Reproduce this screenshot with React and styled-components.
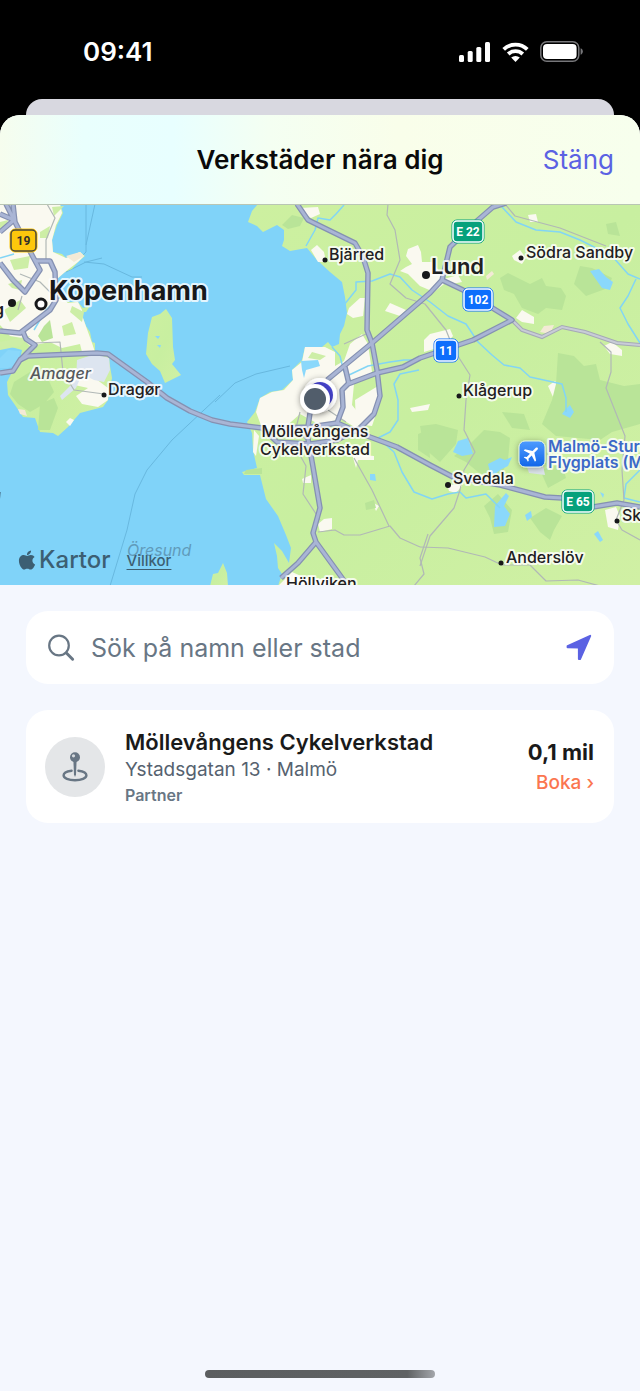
import React from 'react'
import styled, { createGlobalStyle } from 'styled-components'
import { FaApple } from 'react-icons/fa'
import { MdFlight } from 'react-icons/md'

const GlobalStyle = createGlobalStyle`
  * {
    box-sizing: border-box;
  }

  body {
    margin: 0;
    background: #000;
    font-family: Inter, 'Liberation Sans', sans-serif;
    -webkit-font-smoothing: antialiased;
  }
`

const Screen = styled.div`
  display: flex;
  flex-direction: column;
  min-height: 100vh;
  background: #000;
`

const StatusBar = styled.div`
  display: flex;
  align-items: center;
  justify-content: space-between;
  height: 99px;
  padding: 4px 57px 0 83px;
  color: #fff;
`

const Clock = styled.time`
  font-size: 26px;
  font-weight: 600;
`

const StatusIcons = styled.div`
  display: flex;
  align-items: center;
  gap: 11px;
`

const BackCard = styled.div`
  height: 16px;
  margin: 0 26px;
  border-radius: 16px 16px 0 0;
  background: #d8d8e0;
`

const Sheet = styled.main`
  display: flex;
  flex-direction: column;
  flex: 1;
  overflow: hidden;
  border-radius: 20px 20px 0 0;
  background: #f4f7fe;
`

const SheetHeader = styled.header`
  display: grid;
  grid-template-columns: 1fr auto 1fr;
  align-items: center;
  height: 90px;
  padding: 0 26px;
  border-bottom: 1px solid #b9c6b4;
  background: linear-gradient(90deg, #f6fdee 0%, #e9fffd 13%, #e8ffff 27%, #f4fff2 42%, #f9feea 62%, #f7ffed 100%);
`

const SheetTitle = styled.h1`
  grid-column: 2;
  margin: 0;
  color: #0a0a0a;
  font-size: 26px;
  font-weight: 600;
`

const CloseButton = styled.button`
  justify-self: end;
  padding: 0;
  border: 0;
  background: none;
  color: #5b62e3;
  font-family: inherit;
  font-size: 26px;
  cursor: pointer;
`

const MapFrame = styled.section`
  position: relative;
  height: 380px;
  overflow: hidden;
  background: #80d3f9;
`

const MapSvg = styled.svg`
  display: block;
  width: 100%;
  height: 100%;
`

const Label = styled.text`
  font-size: ${({ $size }) => $size || 16}px;
  font-weight: ${({ $weight }) => $weight || 500};
  font-style: ${({ $italic }) => ($italic ? 'italic' : 'normal')};
  text-anchor: ${({ $anchor }) => $anchor || 'start'};
  fill: ${({ $color }) => $color || '#1f2022'};
  stroke: ${({ $halo }) => $halo || 'rgba(255, 255, 255, 0.8)'};
  stroke-width: 4px;
  stroke-linejoin: round;
  paint-order: stroke;
`

const ShieldText = styled.text`
  font-family: Roboto, sans-serif;
  font-size: 12px;
  font-weight: 700;
  text-anchor: middle;
  fill: ${({ $color }) => $color};
`

const Attribution = styled.div`
  position: absolute;
  left: 16px;
  bottom: 10px;
  display: flex;
  align-items: center;
  gap: 16px;
  color: #3c5f73;
`

const MapsBrand = styled.span`
  display: flex;
  align-items: center;
  gap: 1px;
  font-size: 24px;
  font-weight: 500;
  line-height: 30px;
`

const TermsLink = styled.a`
  color: inherit;
  font-size: 15px;
  font-weight: 500;
  text-underline-offset: 3px;
`

const Content = styled.div`
  display: flex;
  flex-direction: column;
  gap: 26px;
  padding: 26px;
`

const SearchField = styled.label`
  display: flex;
  align-items: center;
  height: 73px;
  padding: 0 22px;
  border-radius: 22px;
  background: #fff;
`

const SearchInput = styled.input`
  flex: 1;
  min-width: 0;
  margin-left: 16px;
  padding: 0;
  border: 0;
  outline: 0;
  background: none;
  color: #1c1c1e;
  font-family: inherit;
  font-size: 25px;

  &::placeholder {
    color: #687684;
    opacity: 1;
  }
`

const IconButton = styled.button`
  display: flex;
  padding: 0;
  border: 0;
  background: none;
  cursor: pointer;
`

const WorkshopList = styled.ul`
  margin: 0;
  padding: 0;
  list-style: none;
`

const WorkshopCard = styled.li`
  display: flex;
  align-items: center;
  gap: 20px;
  height: 113px;
  padding: 0 20px 0 19px;
  border-radius: 22px;
  background: #fff;
`

const Avatar = styled.div`
  display: flex;
  align-items: center;
  justify-content: center;
  width: 60px;
  height: 60px;
  border-radius: 50%;
  background: #e4e6e8;
`

const WorkshopInfo = styled.div`
  flex: 1;
`

const WorkshopName = styled.h2`
  margin: 0;
  color: #1a1a1a;
  font-size: 22px;
  font-weight: 600;
  line-height: 30px;
`

const WorkshopAddress = styled.p`
  margin: 0;
  color: #56626f;
  font-size: 19px;
  line-height: 26px;
`

const WorkshopTag = styled.p`
  margin: 0;
  color: #687684;
  font-size: 16px;
  font-weight: 600;
  line-height: 24px;
`

const WorkshopAside = styled.div`
  text-align: right;
`

const Distance = styled.p`
  margin: 0;
  color: #1a1a1a;
  font-size: 22px;
  font-weight: 700;
  line-height: 32px;
`

const BookLink = styled.a`
  color: #fb7650;
  font-size: 19px;
  font-weight: 500;
  line-height: 30px;
  text-decoration: none;
`

const HomeIndicator = styled.div`
  width: 36%;
  height: 8px;
  margin: auto auto 13px;
  border-radius: 4px;
  background: linear-gradient(90deg, #5b5e60 0%, #5f6264 88%, #a3a6ab 100%);
`

const land = [
  // Copenhagen and Amager
  'M0 204H60L63 213 57 225 52 240 53 252 62 254 66 258 80 252 85 256 78 262 72 269 65 272 57 279 60 296 68 302 78 302 83 308 90 306 86 312 78 312 83 318 86 326 90 332 92 342 95 343 95 352 109 356 110 366 112 378 108 400 103 407 80 413 74 420 68 427 58 436 53 433 40 432 35 418 23 417 15 405 8 395 7 382 13 370 20 360 22 350 4 345 0 350Z',
  // Saltholm
  'M152 317L160 314 166 309 172 318 173 347 175 360 172 364 181 375 165 383 160 371 152 364 146 354 148 333Z',
  // Skåne
  'M258 204L252 211 248 222 257 226 263 232 277 225 284 230 284 240 282 246 290 251 307 248 317 260 330 272 342 282 345 297 347 313 344 326 340 334 339 344 332 347 328 342 322 347 305 347 302 360 292 370 293 380 282 390 270 392 260 398 255 412 247 422 252 433 253 450 257 468 242 472 244 475 260 475 266 499 278 516 286 535 291 548 289 563 282 551 274 543 277 556 278 568 282 574 278 586H640V204Z',
  'M210 586L213 574 218 573 223 563 227 573 228 586Z'
]

const urban = [
  'M0 204H60L62 213 56 225 52 240 53 252 66 258 80 252 84 256 78 262 65 272 57 279 59 296 68 303 78 302 82 310 83 318 88 332 92 343 95 352 82 352 80 344 62 348 50 342 30 346 22 338 10 336 0 325Z',
  'M62 372L78 368 92 376 108 388 108 400 98 407 82 404 76 396 88 388 70 384Z',
  'M66 422L70 418 74 420 70 426Z',
  'M305 347L325 347 335 352 335 366 344 361 350 344 362 334 368 344 372 372 354 384 352 405 364 420 356 428 340 418 322 426 300 414 282 430 262 428 256 412 260 398 272 392 284 390 293 380 292 370 302 362Z',
  'M311 250L317 245 324 252 326 262 318 262Z',
  'M349 308L360 298 365 298 363 316 353 318 347 314Z',
  'M300 208L318 207 320 214 311 218 304 213Z',
  'M385 311L390 303 406 310 400 316Z',
  'M408 249L418 245 421 252 422 262 432 262 440 272 444 284 434 292 420 286 414 280 408 274 400 271 406 267 412 264 406 256Z',
  'M444 279L458 275 462 282 452 284Z',
  'M424 340L430 334 450 329 453 336 444 346 424 352Z',
  'M512 256L520 250 526 258 522 264 514 260Z',
  'M516 318L522 310 534 317 534 324 522 322Z',
  'M604 346L612 342 622 350 622 356 610 354Z',
  'M548 386L555 381 561 388 553 397Z',
  'M605 510L616 507 620 516 618 530 608 527Z',
  'M447 484L462 486 456 493 449 491Z',
  'M302 479L311 475 311 483 303 483Z',
  'M318 524L324 519 332 518 332 529 320 532Z',
  'M528 215L536 214 538 222 530 222Z',
  'M372 502L379 506 376 511Z',
  'M410 408L420 406 430 404 428 410 412 412Z',
  'M355 400L378 386 382 396 372 426 356 424Z',
  'M352 454L374 456 374 460 358 460 356 468Z',
  'M254 430L259 436 256 456 253 452Z',
  'M292 572L310 580 330 578 340 586 278 586Z'
]

const forest = [
  'M14 382L30 372 46 374 54 392 44 404 30 412 18 404 10 394Z',
  'M40 404L54 398 58 408 50 430 38 430Z',
  'M44 326L50 320 53 338 42 342 38 336Z',
  'M282 225L292 215 304 218 300 226 288 229Z',
  'M500 278L508 273 530 284 542 278 546 286 561 288 566 296 562 310 546 308 538 314 522 308 514 294 504 290Z',
  'M574 284L580 266 592 268 612 278 608 288 586 296Z',
  'M558 353L574 356 584 366 596 364 600 380 624 386 640 384V424L612 432 600 440 556 436 542 424 552 400 556 384Z',
  'M470 444L484 430 500 432 510 438 508 460 498 482 478 472 466 462 454 456Z',
  'M420 426L436 424 458 430 456 444 440 462 424 448Z',
  'M484 506L498 494 512 510 508 532 494 534 490 518Z',
  'M530 518L546 508 562 516 554 530 550 540 540 532Z',
  'M502 412L524 414 530 430 512 428Z',
  'M540 470L562 464 566 478 548 488Z',
  'M606 224L616 222 620 236 608 234Z',
  'M418 434L428 430 430 458 418 450Z',
  'M365 503L374 500 376 508 366 510Z',
  'M246 470L262 468 262 474 244 474Z'
]

const parks = [
  'M10 260L30 256 28 268 14 270Z',
  'M52 207L64 206 54 216Z',
  'M40 232L50 226 48 238 40 238Z',
  'M8 284L22 280 20 290 12 288Z',
  'M4 310L20 300 26 308 10 322Z',
  'M62 326L72 322 76 334 64 336Z',
  'M0 342L30 336 20 346 0 350Z',
  'M72 306L84 312 82 322 70 312Z',
  'M0 222L8 220 6 230 0 232Z',
  'M312 352L326 356 320 360 308 358Z'
]

const lakes = [
  'M590 271L599 269 606 277 613 282 610 290 602 288Z',
  'M453 452L458 441 468 438 473 454 462 456Z',
  'M488 464L500 458 505 460 512 457 508 466 500 470 494 475 490 472Z',
  'M495 506L506 493 509 496 504 506 510 514 505 526 494 527Z',
  'M525 515L531 511 532 517 527 521Z',
  'M594 534L598 531 603 540 600 542Z',
  'M565 410L570 405 574 412 570 418 562 414Z',
  'M370 474L375 474 376 481 370 480Z',
  'M600 492L604 494 603 498Z',
  'M0 358L8 350 20 351 18 364 8 368 0 368Z',
  'M155 336L160 336 158 339Z',
  'M157 345L161 345 160 348Z',
  'M301 361L318 360 320 366 306 370 304 378 302 370Z'
]

const streams = [
  'M306 246L315 230 318 218 330 220 336 214 344 205',
  'M344 305L356 290 356 282 372 281 390 274 400 277 412 290 430 302 448 316 466 324 478 342 492 355 504 365 520 368 530 377 562 384 566 398 566 412',
  'M502 207L516 222 536 230 560 232 580 240 596 248 612 256 628 274 640 279',
  'M636 279L628 296 620 308 628 324 640 343',
  'M349 375L368 366 390 362 404 360 420 360',
  'M419 370L400 374 394 384 398 400 398 420 390 432 378 438 394 452 402 472 414 492 432 499 448 494 460 492 466 498 486 494 500 508',
  'M640 470L626 484 624 498 640 502',
  'M332 347L340 356 344 372',
  'M34 330L46 310 56 300 68 292',
  'M15 222L22 232',
  'M0 258L14 254',
  'M34 345L26 340'
]

const ferries = [
  'M86 204L86 252 66 272M95 204L86 245M66 272L86 262 102 258M84 262L104 264 132 277H142',
  'M220 395L172 440 147 470 135 494 127 530 110 586',
  'M215 402L235 383 256 374 290 366'
]

const minorRoads = [
  'M388 204L387 215 395 230 400 260 390 284 406 298 425 304 446 330 454 350 470 375 466 400 464 430 475 452 464 470 460 490 454 508 430 536 420 566',
  'M505 204L515 216 560 228 606 246',
  'M600 342L611 352 611 372 606 388 625 436 622 470 624 500 616 520 622 530 640 540',
  'M420 547L448 548 485 557 502 565 530 565 546 581 578 580 600 586',
  'M296 448L306 466 303 494 320 520',
  'M318 532L335 530 344 535 360 535 390 526 400 538 420 547',
  'M354 458L372 490 389 526',
  'M428 534L420 558 424 574 414 586',
  'M328 410L346 422M300 412L296 428 306 440M344 344L366 334',
  'M47 204L55 218 46 240 46 260M20 274L40 282 52 294M34 343L60 342 63 372 74 390 104 394M18 310L22 296'
]

const majorRoads = [
  'M0 373L13 371 20 360 28 356 97 353 108 354 147 382 167 398 190 411 212 420 230 424 262 428 277 442 310 444 337 440 360 428 374 414 380 396 377 370 372 343 367 330 368 273 363 257 355 243 308 220 297 204',
  'M327 380L372 343 430 293 442 280 450 247 478 220 493 207 506 203',
  'M442 280L463 290 512 320 473 340 420 358 403 367 377 373 348 384 342 390 343 407 337 423 370 437 397 447 430 465 453 477 500 485 545 497 562 498 593 507 617 503 640 507',
  'M345 367L349 384',
  'M310 413L307 433 313 467 320 508 313 533 316 542 345 582M316 542L298 563 281 578',
  'M277 428L310 427 337 423',
  'M0 263L13 280 25 292 40 270 33 257 15 222 13 204M0 214L14 220 0 232M6 204L14 220',
  'M35 261L50 261 55 272 56 300 50 310 33 323 20 333 0 331M23 332L26 339 35 345 20 360'
]

const towns = [
  { name: 'Bjärred', x: 329, y: 260, dot: [325, 260] },
  { name: 'Södra Sandby', x: 526, y: 258, dot: [521, 258] },
  { name: 'Lund', x: 431, y: 274, dot: [426, 275], size: 22, weight: 600, r: 4 },
  { name: 'Klågerup', x: 463, y: 396, dot: [459, 396] },
  { name: 'Dragør', x: 108, y: 395, dot: [104, 395] },
  { name: 'Svedala', x: 453, y: 484, dot: [448, 485], r: 3 },
  { name: 'Sk', x: 622, y: 521, dot: [617, 521] },
  { name: 'Anderslöv', x: 506, y: 563, dot: [501, 563] },
  { name: 'Höllviken', x: 286, y: 589 },
  { name: 'g', x: -6, y: 315, dot: [12, 303], weight: 600, r: 4 }
]

const shields = [
  { text: '19', x: 10, y: 229, width: 27, fill: '#fdc70c', line: '#4a473b', ink: '#33312a' },
  { text: 'E 22', x: 452, y: 220, width: 32, fill: '#06a17c', line: '#fff', ink: '#fff' },
  { text: '102', x: 463, y: 288, width: 30, fill: '#0d6efc', line: '#fff', ink: '#fff' },
  { text: '11', x: 434, y: 339, width: 24, fill: '#0d6efc', line: '#fff', ink: '#fff' },
  { text: 'E 65', x: 562, y: 490, width: 32, fill: '#06a17c', line: '#fff', ink: '#fff' }
]

function Shapes({ paths, ...rest }) {
  return (
    <g {...rest}>
      {paths.map(d => (
        <path key={d} d={d} />
      ))}
    </g>
  )
}

function Shield({ shield }) {
  const { text, x, y, width, fill, line, ink } = shield
  return (
    <g>
      <rect x={x} y={y} width={width} height={23} rx={5} fill={fill} stroke={fill} />
      <rect x={x + 1} y={y + 1} width={width - 2} height={21} rx={4} fill={fill} stroke={line} strokeWidth={1.5} />
      <ShieldText x={x + width / 2} y={y + 16} $color={ink}>
        {text}
      </ShieldText>
    </g>
  )
}

function WorkshopMap() {
  return (
    <MapFrame aria-label="Karta">
      <MapSvg viewBox="0 205 640 380" preserveAspectRatio="xMidYMid slice">
        <defs>
          <linearGradient id="airport" x1="0" y1="0" x2="0" y2="1">
            <stop offset="0" stopColor="#4d9bff" />
            <stop offset="1" stopColor="#1266e8" />
          </linearGradient>
          <linearGradient id="farmland" x1="0" y1="0" x2="1" y2="1">
            <stop offset="0" stopColor="#cdf0a0" />
            <stop offset="0.5" stopColor="#c8efa0" />
            <stop offset="1" stopColor="#d0f0a4" />
          </linearGradient>
          <filter id="shadow" x="-50%" y="-50%" width="200%" height="200%">
            <feDropShadow dx="0" dy="1" stdDeviation="3" floodOpacity="0.35" />
          </filter>
        </defs>

        <Shapes paths={ferries} fill="none" stroke="#68b8df" strokeWidth={1} />
        <Shapes paths={land} fill="url(#farmland)" />
        <Shapes paths={urban} fill="#faf9f0" strokeLinejoin="round" />
        <Shapes paths={parks} fill="#cdeea6" />
        <Shapes paths={forest} fill="#b9e498" />
        <path d="M77 360L95 354 109 358 110 370 104 382 94 380 82 374 76 388 62 400 60 396 76 380Z" fill="#dde5f0" />
        <path d="M66 256L80 252 84 256 74 262Z M540 332L544 326 554 325 550 334Z M486 276L492 271 494 274 487 280Z M18 409L25 410 27 416 20 414Z" fill="#f3ead6" />
        <path d="M527 467L543 465 545 475 529 473Z" fill="#dce4ea" />
        <Shapes paths={lakes} fill="#8ad8fb" />
        <Shapes paths={streams} fill="none" stroke="#82d5f5" strokeWidth={1.5} strokeLinejoin="round" />
        <Shapes paths={minorRoads} fill="none" stroke="#b1b8b6" strokeWidth={1.2} strokeLinejoin="round" />
        <path d="M512 320L522 330 542 337 562 327 585 332 617 343 640 345" fill="none" stroke="#a5a9b6" strokeWidth={4} />
        <path d="M512 320L522 330 542 337 562 327 585 332 617 343 640 345" fill="none" stroke="#c8ccd7" strokeWidth={2} />
        <Shapes paths={majorRoads} fill="none" stroke="#8591b2" strokeWidth={5.5} strokeLinejoin="round" />
        <Shapes paths={majorRoads} fill="none" stroke="#a9b5d5" strokeWidth={3} strokeLinejoin="round" />

        {shields.map(shield => (
          <Shield key={shield.text} shield={shield} />
        ))}

        <Label x={30} y={379} $italic $color="#56595c">
          Amager
        </Label>
        <Label x={127} y={556} $italic $weight={400} $color="#609bbb" $halo="none">
          Öresund
        </Label>
        <path d="M0 492L1 492 0 499Z" fill="#5589a6" />
        <circle cx={41} cy={304} r={5} fill="#fff" stroke="#17181a" strokeWidth={3} />
        <Label x={49} y={300} $size={27} $weight={700} $color="#17181a">
          Köpenhamn
        </Label>
        {towns.map(({ name, x, y, dot, size, weight, r = 2.5 }) => (
          <g key={name}>
            {dot && <circle cx={dot[0]} cy={dot[1]} r={r} fill="#17181a" />}
            <Label x={x} y={y} $size={size} $weight={weight}>
              {name}
            </Label>
          </g>
        ))}

        <rect x={519} y={441} width={26} height={26} rx={6} fill="url(#airport)" stroke="#e4f2e0" strokeWidth={1} filter="url(#shadow)" />
        <g transform="rotate(45 532 454)">
          <MdFlight x={522} y={444} size={20} color="#fff" />
        </g>
        <Label x={548} y={452} $weight={600} $color="#3c69c8">
          Malmö-Sturup
        </Label>
        <Label x={548} y={468} $weight={600} $color="#3c69c8">
          Flygplats (MMX)
        </Label>

        <circle cx={320} cy={395} r={17} fill="#fff" filter="url(#shadow)" />
        <circle cx={320} cy={395} r={13} fill="#4744cf" />
        <circle cx={315} cy={399} r={15} fill="#fff" filter="url(#shadow)" />
        <circle cx={315} cy={399} r={11} fill="#515d6b" />
        <Label x={315} y={437} $anchor="middle">
          Möllevångens
        </Label>
        <Label x={315} y={455} $anchor="middle">
          Cykelverkstad
        </Label>
      </MapSvg>
      <Attribution>
        <MapsBrand>
          <FaApple size={22} />
          Kartor
        </MapsBrand>
        <TermsLink href="#villkor">Villkor</TermsLink>
      </Attribution>
    </MapFrame>
  )
}

function SignalIcon() {
  return (
    <svg width="32" height="20" viewBox="0 0 32 20" fill="#fff" aria-hidden="true">
      <rect x="0" y="13" width="5" height="7" rx="1.5" />
      <rect x="8.7" y="9" width="5" height="11" rx="1.5" />
      <rect x="17.3" y="5" width="5" height="15" rx="1.5" />
      <rect x="26" y="0" width="5" height="20" rx="1.5" />
    </svg>
  )
}

function WifiIcon() {
  return (
    <svg width="27" height="20" viewBox="0 0 27 20" aria-hidden="true">
      <g fill="none" stroke="#fff" strokeWidth="3.8">
        <path d="M1.7 7.3a17 17 0 0 1 23.6 0" />
        <path d="M6.2 12a10.6 10.6 0 0 1 14.6 0" />
      </g>
      <path d="M13.5 20L9.2 15.6a6.3 6.3 0 0 1 8.6 0Z" fill="#fff" />
    </svg>
  )
}

function BatteryIcon() {
  return (
    <svg width="43" height="21" viewBox="0 0 43 21" aria-hidden="true">
      <rect x="0.8" y="0.8" width="38" height="19.4" rx="6" fill="none" stroke="#77777a" strokeWidth="1.5" />
      <rect x="3" y="3" width="33.6" height="15" rx="4" fill="#fff" />
      <path d="M40.6 7.3c3 1.2 3 5.2 0 6.4Z" fill="#77777a" />
    </svg>
  )
}

function SearchIcon() {
  return (
    <svg width="27" height="28" viewBox="0 0 27 28" fill="none" stroke="#687684" strokeLinecap="round" aria-hidden="true">
      <circle cx="11" cy="11.5" r="9.8" strokeWidth="2.2" />
      <path d="M18.4 19L24.6 25.2" strokeWidth="3" />
    </svg>
  )
}

function LocationArrow() {
  return (
    <svg width="26" height="27" viewBox="0 0 26 27" aria-hidden="true">
      <path d="M1.6 12.2L24.2 1.8 14 25 12.9 25 12.9 13.4 1.6 13.2Z" fill="#5b62e3" stroke="#5b62e3" strokeWidth="2" strokeLinejoin="round" />
    </svg>
  )
}

function PinIcon() {
  return (
    <svg width="26" height="30" viewBox="0 0 26 30" aria-hidden="true">
      <path d="M9.6 18.7C4.6 19.3 1.6 21 1.6 23.3c0 3 5 5 11.4 5s11.4-2 11.4-5c0-2.3-3-4-8-4.6" fill="none" stroke="#687684" strokeWidth="2.4" strokeLinecap="round" />
      <path d="M11.4 9h3.2l-.6 13.6-1 2.4-1-2.4Z" fill="#687684" />
      <circle cx="13" cy="5.2" r="5" fill="#687684" />
      <circle cx="11.5" cy="3.8" r="1.6" fill="#d5d9dd" />
    </svg>
  )
}

const workshops = [
  {
    name: 'Möllevångens Cykelverkstad',
    address: 'Ystadsgatan 13 · Malmö',
    tag: 'Partner',
    distance: '0,1 mil'
  }
]

export default function App() {
  return (
    <Screen>
      <GlobalStyle />
      <StatusBar>
        <Clock>09:41</Clock>
        <StatusIcons>
          <SignalIcon />
          <WifiIcon />
          <BatteryIcon />
        </StatusIcons>
      </StatusBar>
      <BackCard />
      <Sheet>
        <SheetHeader>
          <SheetTitle>Verkstäder nära dig</SheetTitle>
          <CloseButton type="button">Stäng</CloseButton>
        </SheetHeader>
        <WorkshopMap />
        <Content>
          <SearchField>
            <SearchIcon />
            <SearchInput type="text" placeholder="Sök på namn eller stad" aria-label="Sök på namn eller stad" />
            <IconButton type="button" aria-label="Min position">
              <LocationArrow />
            </IconButton>
          </SearchField>
          <WorkshopList>
            {workshops.map(workshop => (
              <WorkshopCard key={workshop.name}>
                <Avatar>
                  <PinIcon />
                </Avatar>
                <WorkshopInfo>
                  <WorkshopName>{workshop.name}</WorkshopName>
                  <WorkshopAddress>{workshop.address}</WorkshopAddress>
                  <WorkshopTag>{workshop.tag}</WorkshopTag>
                </WorkshopInfo>
                <WorkshopAside>
                  <Distance>{workshop.distance}</Distance>
                  <BookLink href="#boka">Boka ›</BookLink>
                </WorkshopAside>
              </WorkshopCard>
            ))}
          </WorkshopList>
        </Content>
        <HomeIndicator />
      </Sheet>
    </Screen>
  )
}
